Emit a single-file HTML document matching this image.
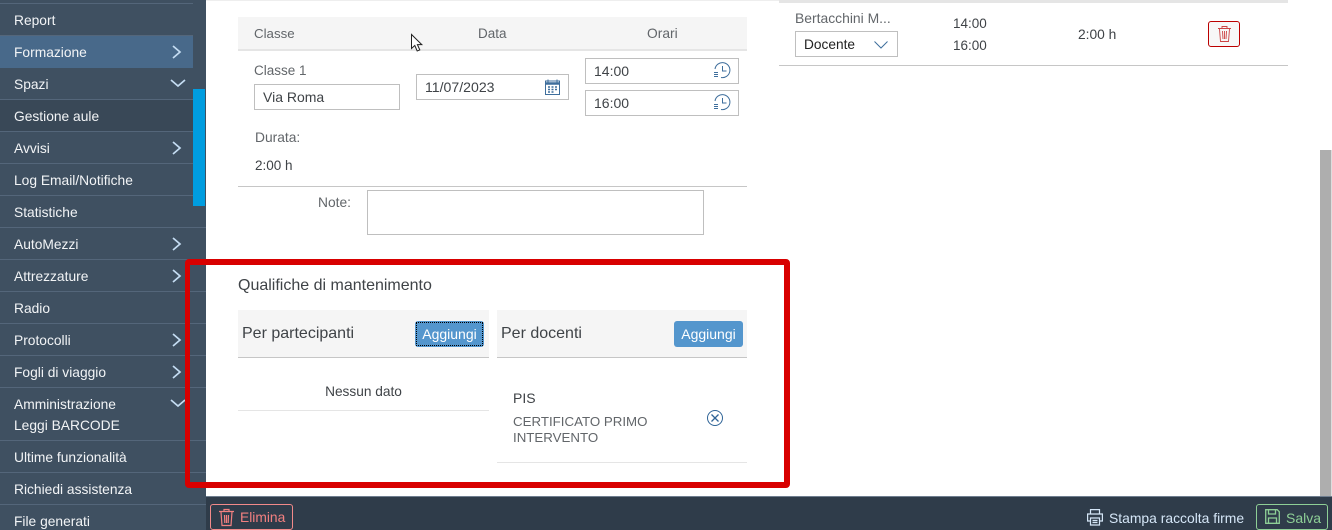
<!DOCTYPE html>
<html lang="it"><head><meta charset="utf-8"><title>Qualifiche</title>
<style>
html,body{margin:0;padding:0}
body{width:1332px;height:530px;position:relative;overflow:hidden;background:#fff;font-family:"Liberation Sans",sans-serif;font-size:14px;color:#3f4347}
.a,.m,.sep,.t,.box{position:absolute}
.t{white-space:nowrap;line-height:16px}
.g{color:#62666a}
.m{left:14px;color:#f2f4f6;font-size:13.8px;line-height:16px;white-space:nowrap}
.sep{left:0;height:1px;background:#54667a}
.box{box-sizing:border-box;border:1px solid #bfbfbf;background:#fff}
.hr{position:absolute;height:1px;background:#c6c6c6}
.btn{position:absolute;box-sizing:border-box;width:69px;height:26px;background:#5496cd;border-radius:3px;color:#fff;text-align:center;line-height:27px;font-size:14px}
svg{position:absolute;overflow:visible}
</style></head><body>
<div class="a" style="left:0;top:0;width:206px;height:530px;background:#3f5061"></div>
<div class="a" style="left:0;top:36px;width:193px;height:32px;background:#48698a"></div>
<div class="a" style="left:0;top:100px;width:193px;height:31px;background:#394857"></div>
<div class="a" style="left:193px;top:89px;width:12px;height:117px;background:#009de0"></div>
<div class="sep" style="top:3px;width:193px"></div><div class="sep" style="top:35px;width:193px"></div>
<div class="sep" style="top:99px;width:193px"></div><div class="sep" style="top:131px;width:193px"></div>
<div class="sep" style="top:163px;width:193px"></div><div class="sep" style="top:195px;width:193px"></div>
<div class="sep" style="top:227px;width:206px"></div><div class="sep" style="top:259px;width:206px"></div>
<div class="sep" style="top:291px;width:206px"></div><div class="sep" style="top:323px;width:206px"></div>
<div class="sep" style="top:355px;width:206px"></div><div class="sep" style="top:387px;width:206px"></div>
<div class="sep" style="top:440px;width:206px"></div><div class="sep" style="top:472px;width:206px"></div>
<div class="sep" style="top:504px;width:206px"></div>
<div class="m" style="top:13px">Report</div>
<div class="m" style="top:45px">Formazione</div>
<div class="m" style="top:77px">Spazi</div>
<div class="m" style="top:109px">Gestione aule</div>
<div class="m" style="top:141px">Avvisi</div>
<div class="m" style="top:173px">Log Email/Notifiche</div>
<div class="m" style="top:205px">Statistiche</div>
<div class="m" style="top:237px">AutoMezzi</div>
<div class="m" style="top:269px">Attrezzature</div>
<div class="m" style="top:301px">Radio</div>
<div class="m" style="top:333px">Protocolli</div>
<div class="m" style="top:365px">Fogli di viaggio</div>
<div class="m" style="top:397px">Amministrazione</div>
<div class="m" style="top:418px">Leggi BARCODE</div>
<div class="m" style="top:450px">Ultime funzionalità</div>
<div class="m" style="top:482px">Richiedi assistenza</div>
<div class="m" style="top:514px">File generati</div>
<svg style="left:0;top:0" width="206" height="420" fill="none" stroke="#c4dcf2" stroke-width="1.7">
<path d="M173 46l7 6-7 6M173 142l7 6-7 6M173 238l7 6-7 6M173 270l7 6-7 6M173 334l7 6-7 6M173 366l7 6-7 6"/>
<path d="M171 80l7 6 7-6M171 400l7 6 7-6"/>
</svg>

<!-- main -->
<div class="a" style="left:206px;top:0;width:574px;height:1px;background:#eee"></div>
<div class="a" style="left:238px;top:17px;width:509px;background:#f5f5f5;border-bottom:2px solid #e5e5e5;box-sizing:border-box;height:34px"></div>
<div class="t g" style="left:254px;top:26px;font-size:13.300px">Classe</div>
<div class="t g" style="left:478px;top:26px;font-size:13.500px">Data</div>
<div class="t g" style="left:647px;top:26px;font-size:13.800px">Orari</div>
<svg style="left:411px;top:34px" width="14" height="20" viewBox="0 0 14 20"><path d="M.5.5v14l3.3-3 2.4 5.5 2.6-1.1-2.4-5.3h4.4z" fill="#fff" stroke="#222"/></svg>
<div class="t g" style="left:254px;top:63px;font-size:13.500px">Classe 1</div>
<div class="box" style="left:254px;top:84px;width:146px;height:26px"></div>
<div class="t" style="left:263px;top:89px">Via Roma</div>
<div class="box" style="left:416px;top:74px;width:153px;height:26px"></div>
<div class="t" style="left:425px;top:79px;font-size:14.100px">11/07/2023</div>
<svg style="left:545px;top:79px" width="15" height="16" fill="none" stroke="#3e6e9c"><rect x=".5" y="2" width="14" height="13.500"/><path d="M0 4.500h15" stroke-width="2.500"/><path d="M3 .5v3M12 .5v3"/><path d="M3 8h2M6.500 8h2M10 8h2M3 10.500h2M6.500 10.500h2M10 10.500h2M3 13h2M6.500 13h2" stroke-width="1.500"/></svg>
<div class="box" style="left:585px;top:58px;width:154px;height:26px"></div>
<div class="t" style="left:594px;top:63px">14:00</div>
<div class="box" style="left:585px;top:90px;width:154px;height:26px"></div>
<div class="t" style="left:594px;top:95px">16:00</div>
<svg style="left:714px;top:62px" width="17" height="18" fill="none" stroke="#3e6e9c"><path d="M1 7A7.500 7.500 0 1 1 7 15.500"/><path d="M8.500 4v5h4"/><path d="M0 10.500h4M0 12.500h4M0 14.500h4"/></svg>
<svg style="left:714px;top:94px" width="17" height="18" fill="none" stroke="#3e6e9c"><path d="M1 7A7.500 7.500 0 1 1 7 15.500"/><path d="M8.500 4v5h4"/><path d="M0 10.500h4M0 12.500h4M0 14.500h4"/></svg>
<div class="t g" style="left:255px;top:130px;font-size:13.800px">Durata:</div>
<div class="t" style="left:255px;top:158px;font-size:13.500px">2:00 h</div>
<div class="hr" style="left:238px;top:186px;width:509px"></div>
<div class="t g" style="left:318px;top:195px;font-size:13.800px">Note:</div>
<div class="box" style="left:367px;top:190px;width:337px;height:45px"></div>

<div class="t" style="left:238px;top:278px;font-size:16px">Qualifiche di mantenimento</div>
<div class="a" style="left:238px;top:310px;width:251px;height:48px;background:#f5f5f5;border-bottom:1px solid #c6c6c6;box-sizing:border-box"></div>
<div class="a" style="left:497px;top:310px;width:250px;height:48px;background:#f5f5f5;border-bottom:1px solid #c6c6c6;box-sizing:border-box"></div>
<div class="t" style="left:242px;top:326px;font-size:16px">Per partecipanti</div>
<div class="t" style="left:501px;top:326px;font-size:16px">Per docenti</div>
<div class="btn" style="left:415px;top:321px"><div style="position:absolute;inset:1px;border:1px dotted #000;line-height:23px">Aggiungi</div></div>
<div class="btn" style="left:674px;top:321px">Aggiungi</div>
<div class="t" style="left:238px;top:384px;width:251px;text-align:center;font-size:13.700px">Nessun dato</div>
<div class="a" style="left:238px;top:410px;width:251px;height:1px;background:#e5e5e5"></div>
<div class="t" style="left:513px;top:390px;font-size:14px">PIS</div>
<div class="t g" style="left:513px;top:414px;font-size:13.300px">CERTIFICATO PRIMO</div>
<div class="t g" style="left:513px;top:430px;font-size:13.300px">INTERVENTO</div>
<svg style="left:707px;top:410px" width="16" height="16" fill="none" stroke="#2f6497"><circle cx="8" cy="8" r="7.500"/><path d="M4.500 4.500l7 7M11.500 4.500l-7 7" stroke-width="1.300"/></svg>
<div class="a" style="left:497px;top:462px;width:250px;height:1px;background:#e5e5e5"></div>

<!-- right table -->
<div class="a" style="left:779px;top:0;width:509px;height:3px;background:#e5e5e5"></div>
<div class="t g" style="left:795px;top:10px;font-size:13.900px">Bertacchini M...</div>
<div class="box" style="left:795px;top:31px;width:103px;height:26px"></div>
<div class="t" style="left:804px;top:37px;font-size:13.700px;color:#222">Docente</div>
<svg style="left:874px;top:41px" width="14" height="8" fill="none" stroke="#3e6e9c"><path d="M.5.500l6.500 6.500 6.500-6.500"/></svg>
<div class="t" style="left:953px;top:16px;font-size:13.500px">14:00</div>
<div class="t" style="left:953px;top:38px;font-size:13.500px">16:00</div>
<div class="t" style="left:1078px;top:27px;font-size:13.800px">2:00 h</div>
<div class="a" style="left:1208px;top:21px;width:32px;height:26px;box-sizing:border-box;border:1px solid #bb0000;border-radius:3px;background:#f7f7f7"></div>
<svg style="left:1218px;top:26px" width="13" height="16" fill="none" stroke="#cc4444" stroke-width=".9"><path d="M0 2.500h13M4 2V.5h5V2"/><path d="M1.500 3l1 12.500h8l1-12.500M4.500 5l.5 8M6.500 5v8M8.500 5l-.5 8"/></svg>
<div class="hr" style="left:779px;top:65px;width:509px"></div>

<!-- scrollbar -->
<div class="a" style="left:1320px;top:150px;width:12px;height:346px;background:#aeaeae"></div>
<div class="a" style="left:1331px;top:150px;width:1px;height:346px;background:#ddd"></div>

<!-- red highlight -->
<div class="a" style="left:185px;top:259px;width:605px;height:229px;box-sizing:border-box;border:6px solid #d80000;border-left-width:5px;border-radius:4px"></div>

<!-- footer -->
<div class="a" style="left:206px;top:496px;width:1126px;height:34px;background:#2f3c4a;border-top:1px solid #6f7e8f;box-sizing:border-box"></div>
<div class="a" style="left:210px;top:504px;width:83px;height:26px;box-sizing:border-box;border:1px solid #f28a8a;border-radius:3px"></div>
<svg style="left:219px;top:509px" width="15" height="17" fill="none" stroke="#f28080" stroke-width="1.200"><path d="M0 2.500h15M5 2V.5h5V2"/><path d="M2 3l1 13.500h9l1-13.500M5.500 6l.3 8M7.500 6v8M9.500 6l-.3 8"/></svg>
<div class="t" style="left:240px;top:510px;color:#f28080;font-size:13.800px">Elimina</div>
<svg style="left:1087px;top:509px" width="16" height="17" fill="none" stroke="#d5e6f7" stroke-width="1.200"><path d="M3.500 5V.6h9V5M3.500 12H.6V5h14.800v7h-2.900"/><path d="M3.500 9h9v7h-9zM5.500 11.500h5M5.500 13.500h5"/></svg>
<div class="t" style="left:1109px;top:510px;color:#d5e6f7;font-size:13.900px">Stampa raccolta firme</div>
<div class="a" style="left:1256px;top:504px;width:72px;height:26px;box-sizing:border-box;border:1px solid #8ecf96;border-radius:3px"></div>
<svg style="left:1265px;top:509px" width="15" height="15" fill="none" stroke="#8ecf96" stroke-width="1.300"><path d="M.7.700h11.500l2.100 2.100v11.500H.7z"/><path d="M3.500 1v4h7V1M3.500 14V9h8v5"/></svg>
<div class="t" style="left:1286px;top:510px;color:#8ecf96;font-size:14px">Salva</div>
</body></html>
